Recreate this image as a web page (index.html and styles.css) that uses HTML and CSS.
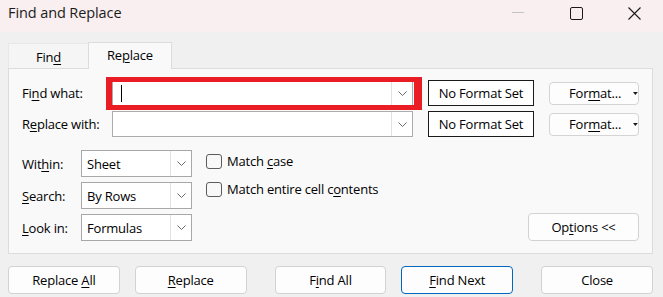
FILE: index.html
```html
<!DOCTYPE html>
<html>
<head>
<meta charset="utf-8">
<link rel="stylesheet" href="styles.css">
</head>
<body>
<div class="titlebar">
  <span class="title">Find and Replace</span>
  <div class="controls">
    <span class="ctl"><svg width="12" height="12" viewBox="0 0 12 12"><line x1="0" y1="5.5" x2="12" y2="5.5" stroke="#c4c4c4" stroke-width="1"/></svg></span>
    <span class="ctl"><svg width="13" height="13" viewBox="0 0 13 13"><rect x="0.5" y="0.5" width="12" height="12" rx="1.5" fill="none" stroke="#1a1a1a" stroke-width="1"/></svg></span>
    <span class="ctl"><svg width="13" height="13" viewBox="0 0 13 13"><path d="M0.5 0.5 L12.5 12.5 M12.5 0.5 L0.5 12.5" stroke="#1a1a1a" stroke-width="1.1" fill="none"/></svg></span>
  </div>
</div>
<div class="main">
  <div class="tabs">
    <div class="tab">Fin<u>d</u></div>
    <div class="tab active">Re<u>p</u>lace</div>
  </div>
  <div class="panel">
    <div class="fields">
      <div class="label">Fi<u>n</u>d what:</div>
      <div class="combo">
        <span class="caret"></span>
        <span class="drop"><svg width="9" height="5" viewBox="0 0 9 5"><polyline points="0.5,0.5 4.5,4.5 8.5,0.5" fill="none" stroke="#6b6b6b" stroke-width="1"/></svg></span>
        <span class="highlight"></span>
      </div>
      <div class="fmtset">No Format Set</div>
      <button class="fmtbtn"><span>For<u>m</u>at...</span><svg width="5" height="3" viewBox="0 0 5 3"><polygon points="0,0 5,0 2.5,3" fill="#1a1a1a"/></svg></button>

      <div class="label">R<u>e</u>place with:</div>
      <div class="combo">
        <span class="drop"><svg width="9" height="5" viewBox="0 0 9 5"><polyline points="0.5,0.5 4.5,4.5 8.5,0.5" fill="none" stroke="#6b6b6b" stroke-width="1"/></svg></span>
      </div>
      <div class="fmtset">No Format Set</div>
      <button class="fmtbtn"><span>For<u>m</u>at...</span><svg width="5" height="3" viewBox="0 0 5 3"><polygon points="0,0 5,0 2.5,3" fill="#1a1a1a"/></svg></button>
    </div>
    <div class="lower">
      <div class="opts">
        <div class="label">Wit<u>h</u>in:</div>
        <div class="combo small"><span class="val">Sheet</span><span class="drop"><svg width="9" height="5" viewBox="0 0 9 5"><polyline points="0.5,0.5 4.5,4.5 8.5,0.5" fill="none" stroke="#6b6b6b" stroke-width="1"/></svg></span></div>
        <div class="label"><u>S</u>earch:</div>
        <div class="combo small"><span class="val">By Rows</span><span class="drop"><svg width="9" height="5" viewBox="0 0 9 5"><polyline points="0.5,0.5 4.5,4.5 8.5,0.5" fill="none" stroke="#6b6b6b" stroke-width="1"/></svg></span></div>
        <div class="label"><u>L</u>ook in:</div>
        <div class="combo small"><span class="val">Formulas</span><span class="drop"><svg width="9" height="5" viewBox="0 0 9 5"><polyline points="0.5,0.5 4.5,4.5 8.5,0.5" fill="none" stroke="#6b6b6b" stroke-width="1"/></svg></span></div>
      </div>
      <div class="checks">
        <div class="check"><span class="box"></span><span>Match <u>c</u>ase</span></div>
        <div class="check"><span class="box"></span><span>Match entire cell c<u>o</u>ntents</span></div>
      </div>
      <button class="btn optbtn">Op<u>t</u>ions &lt;&lt;</button>
    </div>
  </div>
  <div class="actions">
    <button class="btn">Replace <u>A</u>ll</button>
    <button class="btn"><u>R</u>eplace</button>
    <button class="btn sep">F<u>i</u>nd All</button>
    <button class="btn primary"><u>F</u>ind Next</button>
    <button class="btn sep">Close</button>
  </div>
</div>
</body>
</html>
```
FILE: styles.css
```css
* { box-sizing: border-box; }
body {
  margin: 0;
  width: 663px;
  height: 297px;
  overflow: hidden;
  background: #f0f0f0;
  font-family: "Open Sans", "Noto Sans", sans-serif;
  font-size: 13px;
  letter-spacing: -0.2px;
  color: #000;
}
u { text-underline-offset: 2px; text-decoration-thickness: 1px; }

.titlebar {
  height: 32px;
  background: #f9eef0;
  display: flex;
  align-items: flex-start;
}
.title {
  flex: 1;
  padding-left: 8px;
  margin-top: 3px;
  line-height: 20px;
  font-size: 14.5px;
  letter-spacing: -0.1px;
  color: #1b1b1b;
}
.controls { display: flex; }
.ctl {
  width: 58px;
  height: 32px;
  display: flex;
  justify-content: center;
  padding-top: 7px;
}
.ctl svg { display: block; }

.main { padding: 10px 10px 0 8px; }

.tabs {
  display: flex;
  align-items: flex-end;
  height: 26px;
}
.tab {
  width: 80px;
  height: 25px;
  background: #f5f5f5;
  border: 1px solid #e8e8e8;
  border-bottom: none;
  border-right: none;
  text-align: center;
  padding-top: 4px;
  line-height: 18px;
}
.tab.active {
  position: relative;
  z-index: 1;
  width: 84px;
  height: 27px;
  margin-bottom: -1px;
  background: #f9f9f9;
  border: 1px solid #dcdcdc;
  border-bottom: none;
  padding-top: 3px;
}

.panel {
  width: 645px;
  background: #f9f9f9;
  border: 1px solid #dcdcdc;
  padding: 11px 13px 12px 13px;
}

.fields {
  display: grid;
  grid-template-columns: 75px 301px 106px 90px;
  grid-auto-rows: 26px;
  column-gap: 15px;
  row-gap: 5px;
}
.label {
  display: flex;
  align-items: center;
  white-space: nowrap;
}

.combo {
  position: relative;
  display: flex;
  align-items: center;
  background: #fff;
  border: 1px solid #acacac;
}
.caret {
  width: 1px;
  height: 17px;
  background: #000;
  margin-left: 8px;
}
.drop {
  margin-left: auto;
  width: 21px;
  align-self: stretch;
  border-left: 1px solid #e2e2e2;
  display: flex;
  align-items: center;
  justify-content: center;
}
.drop svg { display: block; }
.highlight {
  position: absolute;
  left: -7px;
  top: -4px;
  width: 316px;
  height: 33px;
  border-style: solid;
  border-color: #ea1c24;
  border-width: 5px 8px 5px 6px;
}
.combo.small { border-color: #a8a8a8; }
.val { padding-left: 5px; }

.fmtset {
  border: 1px solid #1a1a1a;
  background: #fff;
  display: flex;
  align-items: center;
  justify-content: center;
}
.fmtbtn {
  align-self: center;
  height: 23px;
  font: inherit;
  letter-spacing: inherit;
  color: #000;
  background: #fdfdfd;
  border: 1px solid #d4d4d4;
  border-radius: 4px;
  display: flex;
  align-items: center;
  padding: 0 0 0 19px;
}
.fmtbtn svg { margin-left: 12px; display: block; }

.lower {
  display: flex;
  align-items: flex-end;
  margin-top: 13px;
}
.opts {
  display: grid;
  grid-template-columns: 59px 111px;
  grid-auto-rows: 27px;
  row-gap: 5px;
}
.checks {
  align-self: flex-start;
  margin-left: 14px;
  padding-top: 2px;
  display: flex;
  flex-direction: column;
  gap: 10px;
}
.check {
  height: 18px;
  display: flex;
  align-items: center;
  gap: 5px;
}
.box {
  width: 16px;
  height: 15px;
  border: 1px solid #5c5c5c;
  border-radius: 3px;
  background: #f8f8f8;
}

.btn {
  width: 112px;
  height: 28px;
  font: inherit;
  letter-spacing: inherit;
  color: #000;
  background: #fdfdfd;
  border: 1px solid #d2d2d2;
  border-radius: 4px;
  padding: 0;
}
.optbtn { width: 111px; margin-left: auto; }
.btn.primary { border-color: #0067c0; }

.actions {
  display: flex;
  gap: 15px;
  margin-top: 12px;
}
.actions .sep { margin-left: 13px; }
```
